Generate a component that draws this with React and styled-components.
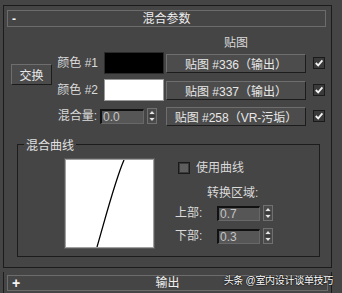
import React from 'react';
import styled, { createGlobalStyle } from 'styled-components';

const FONT = `"Liberation Sans", "Noto Sans CJK SC", sans-serif`;

const GlobalStyle = createGlobalStyle`
  html, body { margin: 0; padding: 0; background: #454545; }
  body { font-family: ${FONT}; }
`;

const Screen = styled.div`
  position: relative;
  width: 342px;
  height: 293px;
  overflow: hidden;
  box-sizing: border-box;
  padding: 5px 0 0 3px;
  background: #454545;
  font-family: ${FONT};
  font-size: 12px;
  color: #dadada;
`;

const Panel = styled.div`
  box-sizing: border-box;
  width: 329px;
  height: 263px;
  border: 1px solid #1c1c1c;
  padding: 4px 0 0 3px;
`;

const RollBar = styled.div`
  box-sizing: border-box;
  width: ${p => p.$w}px;
  height: ${p => p.$h}px;
  border: 1px solid #6c6c6c;
  display: grid;
  grid-template-columns: 20px 1fr 20px;
  align-items: center;
  line-height: 14px;
  color: #efefef;
`;

const Sign = styled.span`
  padding-left: 4px;
  font-weight: bold;
  font-size: ${p => p.$size}px;
  color: #f4f4f4;
`;

const BarTitle = styled.span`
  text-align: center;
`;

const MapGrid = styled.div`
  display: grid;
  margin: 9px 0 0 4px;
  grid-template-columns: 41px 52px 62px 147px 12px;
  grid-template-rows: 11px 22px 22px 20px;
  row-gap: 5px;
`;

const ColumnHead = styled.div`
  grid-column: 4;
  grid-row: 1;
  align-self: start;
  padding-right: 7px;
  text-align: center;
  line-height: 14px;
`;

const SwapButton = styled.div`
  grid-column: 1;
  grid-row: 2 / span 2;
  align-self: start;
  margin-top: 12px;
  box-sizing: border-box;
  width: 41px;
  height: 21px;
  background: #4b4b4b;
  border: 1px solid;
  border-color: #6e6e6e #1c1c1c #1c1c1c #6e6e6e;
  display: flex;
  align-items: center;
  justify-content: center;
  color: #e6e6e6;
`;

const RowLabel = styled.div`
  grid-column: 2;
  grid-row: ${p => p.$row};
  align-self: center;
  text-align: right;
  padding-right: 6px;
  line-height: 14px;
  white-space: nowrap;
`;

const Swatch = styled.div`
  grid-column: 3;
  grid-row: ${p => p.$row};
  box-sizing: border-box;
  width: 60px;
  height: 22px;
  background: ${p => p.$color};
  border: 1px solid ${p => (p.$color === '#000' ? '#2a2a2a' : '#9a9a9a')};
`;

const MapButton = styled.div`
  grid-column: 4;
  grid-row: ${p => p.$row};
  align-self: center;
  box-sizing: border-box;
  width: 140px;
  height: 19px;
  background: #4c4c4c;
  border: 1px solid;
  border-color: #6e6e6e #1c1c1c #1c1c1c #6e6e6e;
  display: flex;
  align-items: center;
  justify-content: center;
  color: #e8e8e8;
  white-space: nowrap;
`;

const CheckCell = styled.div`
  grid-column: 5;
  grid-row: ${p => p.$row};
  align-self: center;
  display: flex;
`;

const Box = styled.div`
  box-sizing: border-box;
  width: 12px;
  height: 12px;
  border: 1px solid #1a1a1a;
  background: ${p => (p.$checked ? '#3a3a3a' : '#5e5e5e')};
  box-shadow: ${p => (p.$checked ? 'none' : 'inset 0 0 0 1px #3a3a3a')};
  display: flex;
  align-items: center;
  justify-content: center;
`;

const AmountRow = styled.div`
  grid-column: 1 / 4;
  grid-row: 4;
  display: flex;
  justify-content: flex-end;
  align-items: center;
  gap: 3px;
  padding-right: 9px;
`;

const FieldLabel = styled.span`
  line-height: 14px;
  white-space: nowrap;
  width: ${p => (p.$w ? `${p.$w}px` : 'auto')};
`;

const SpinBox = styled.div`
  display: flex;
  align-items: center;
  gap: 3px;
`;

const SpinInput = styled.div`
  box-sizing: border-box;
  width: ${p => p.$w}px;
  height: 15px;
  background: #565656;
  border-top: 2px solid #111;
  border-left: 2px solid #111;
  border-right: 1px solid #686868;
  border-bottom: 1px solid #686868;
  padding-left: 1px;
  line-height: 12px;
  font-size: 12px;
  color: #c4c4c4;
`;

const SpinArrows = styled.div`
  box-sizing: border-box;
  width: 10px;
  height: 16px;
  border: 1px solid #707070;
  background: #4a4a4a;
  display: flex;
`;

const Group = styled.fieldset`
  box-sizing: border-box;
  margin: 11px 0 0 10px;
  padding: 0;
  width: 303px;
  height: 120px;
  min-width: 0;
  border: 1px solid #1c1c1c;
`;

const Legend = styled.legend`
  margin-left: 6px;
  padding: 4px 2px 0 2px;
  line-height: 10px;
  font-size: 12px;
  color: #e2e2e2;
`;

const GroupBody = styled.div`
  display: flex;
  align-items: flex-start;
`;

const CurveFrame = styled.div`
  box-sizing: border-box;
  margin: 8px 0 0 47px;
  width: 89px;
  height: 89px;
  background: #fff;
  border: 1px solid #a0a0a0;
  box-shadow: 0 0 0 1px #5a5a5a;
  display: flex;
`;

const SideColumn = styled.div`
  margin-left: 21px;
  display: flex;
  flex-direction: column;
  align-items: flex-start;
`;

const CheckRow = styled.div`
  margin: 11px 0 0 3px;
  display: flex;
  align-items: center;
  gap: 6px;
  line-height: 14px;
  height: 12px;
`;

const SubHead = styled.div`
  margin: 12px 0 0 32px;
  line-height: 14px;
`;

const LimitRow = styled.div`
  margin-top: ${p => p.$top}px;
  display: flex;
  align-items: center;
  height: 16px;
`;

const NextPanel = styled.div`
  box-sizing: border-box;
  margin-top: 4px;
  width: 329px;
  height: 30px;
  border-left: 1px solid #1c1c1c;
  border-right: 1px solid #1c1c1c;
  padding: 3px 0 0 3px;
`;

const Watermark = styled.div`
  position: absolute;
  right: 9px;
  top: 274px;
  font-size: 10px;
  line-height: 14px;
  letter-spacing: -0.3px;
  color: #ffffff;
  text-shadow: 0 0 2px #000, 0 0 1px #000;
  white-space: nowrap;
`;

const Tick = () => (
  <svg width="10" height="10" viewBox="0 0 10 10">
    <path d="M1.8 5 L4.2 7.4 L8.4 2.4" fill="none" stroke="#f4f4f4" strokeWidth="1.8" />
  </svg>
);

const Arrows = () => (
  <svg width="8" height="14" viewBox="0 0 8 14">
    <path d="M4 2 L6.5 5 L1.5 5 Z" fill="#e6e6e6" />
    <line x1="1" y1="7" x2="7" y2="7" stroke="#2a2a2a" strokeWidth="1" />
    <path d="M1.5 9 L6.5 9 L4 12 Z" fill="#e6e6e6" />
  </svg>
);

const Spinner = ({ value, w }) => (
  <SpinBox>
    <SpinInput $w={w}>{value}</SpinInput>
    <SpinArrows><Arrows /></SpinArrows>
  </SpinBox>
);

const CheckBox = ({ checked }) => <Box $checked={checked}>{checked && <Tick />}</Box>;

export default function App() {
  return (
    <>
      <GlobalStyle />
      <Screen>
        <Panel>
          <RollBar $w={319} $h={17}>
            <Sign $size={12}>-</Sign>
            <BarTitle>混合参数</BarTitle>
            <span />
          </RollBar>

          <MapGrid>
            <ColumnHead>贴图</ColumnHead>
            <SwapButton>交换</SwapButton>

            <RowLabel $row={2}>颜色 #1</RowLabel>
            <Swatch $row={2} $color="#000" />
            <MapButton $row={2}>贴图 #336（输出）</MapButton>
            <CheckCell $row={2}><CheckBox checked /></CheckCell>

            <RowLabel $row={3}>颜色 #2</RowLabel>
            <Swatch $row={3} $color="#fff" />
            <MapButton $row={3}>贴图 #337（输出）</MapButton>
            <CheckCell $row={3}><CheckBox checked /></CheckCell>

            <AmountRow>
              <FieldLabel>混合量:</FieldLabel>
              <Spinner value="0.0" w={44} />
            </AmountRow>
            <MapButton $row={4}>贴图 #258（VR-污垢）</MapButton>
            <CheckCell $row={4}><CheckBox checked /></CheckCell>
          </MapGrid>

          <Group>
            <Legend>混合曲线</Legend>
            <GroupBody>
              <CurveFrame>
                <svg width="87" height="87" viewBox="0 0 87 87">
                  <path d="M58 0 C 50 18, 43 45, 31 87" fill="none" stroke="#000" strokeWidth="1.3" />
                </svg>
              </CurveFrame>
              <SideColumn>
                <CheckRow>
                  <CheckBox />
                  <span>使用曲线</span>
                </CheckRow>
                <SubHead>转换区域:</SubHead>
                <LimitRow $top={5}>
                  <FieldLabel $w={42}>上部:</FieldLabel>
                  <Spinner value="0.7" w={43} />
                </LimitRow>
                <LimitRow $top={7}>
                  <FieldLabel $w={42}>下部:</FieldLabel>
                  <Spinner value="0.3" w={43} />
                </LimitRow>
              </SideColumn>
            </GroupBody>
          </Group>
        </Panel>

        <NextPanel>
          <RollBar $w={321} $h={16}>
            <Sign $size={14}>+</Sign>
            <BarTitle>输出</BarTitle>
            <span />
          </RollBar>
        </NextPanel>

        <Watermark>头条 @室内设计谈单技巧</Watermark>
      </Screen>
    </>
  );
}
